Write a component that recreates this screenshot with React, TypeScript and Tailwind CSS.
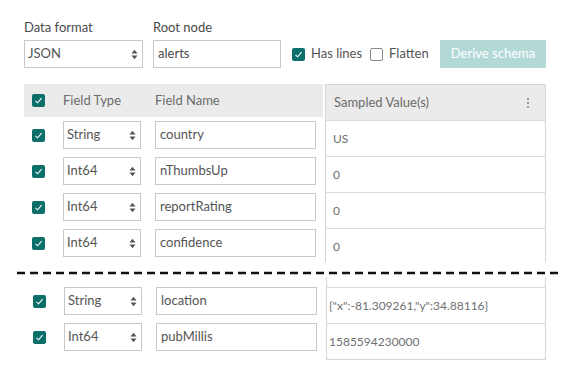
import React from 'react';

type Field = {
	type: string;
	name: string;
	sample: string;
};

const topFields: Field[] = [
	{ type: 'String', name: 'country', sample: 'US' },
	{ type: 'Int64', name: 'nThumbsUp', sample: '0' },
	{ type: 'Int64', name: 'reportRating', sample: '0' },
	{ type: 'Int64', name: 'confidence', sample: '0' }
];

const bottomFields: Field[] = [
	{ type: 'String', name: 'location', sample: '{"x":-81.309261,"y":34.88116}' },
	{ type: 'Int64', name: 'pubMillis', sample: '1585594230000' }
];

const Check = ({ checked = true }: { checked?: boolean }) =>
	checked ? (
		<span className="flex h-[13px] w-[13px] shrink-0 items-center justify-center rounded-[2px] bg-[#0d6f69]">
			<svg width="9" height="9" viewBox="0 0 9 9" fill="none">
				<path d="M1.5 4.8 L3.6 6.8 L7.6 2.2" stroke="white" strokeWidth="1.1" />
			</svg>
		</span>
	) : (
		<span className="block h-[13px] w-[13px] shrink-0 rounded-[2px] border border-[#8a8a8a] bg-white" />
	);

const SortArrows = () => (
	<svg width="7" height="11" viewBox="0 0 7 11" className="shrink-0">
		<path d="M0.5 4.5 L3.5 0.8 L6.5 4.5 Z" fill="#555" />
		<path d="M0.5 6.5 L3.5 10.2 L6.5 6.5 Z" fill="#555" />
	</svg>
);

const Select = ({ value, width }: { value: string; width: string }) => (
	<div
		className={`flex h-[28px] ${width} items-center justify-between border border-[#c8c8c8] bg-white pr-[4px] pl-[3px] text-[13px] text-[#555]`}
	>
		<span>{value}</span>
		<SortArrows />
	</div>
);

const FieldRow = ({ field }: { field: Field }) => (
	<div className="flex h-[36px] items-center">
		<div className="ml-[8px]">
			<Check />
		</div>
		<div className="ml-[18px]">
			<Select value={field.type} width="w-[78px]" />
		</div>
		<div className="ml-[14px] flex h-[28px] w-[161px] items-center border border-[#c8c8c8] bg-white pl-[4px] text-[13px] text-[#555]">
			{field.name}
		</div>
	</div>
);

const SampleCell = ({ value, pad }: { value: string; pad: string }) => (
	<div
		className={`flex h-[36px] items-center border-t border-[#dcdcdc] ${pad} text-[12px] text-[#707070]`}
	>
		{value}
	</div>
);

export default function App() {
	return (
		<div
			className="relative h-[371px] w-[568px] overflow-hidden bg-white"
			style={{ fontFamily: 'Lato, "Noto Sans", sans-serif' }}
		>
			{/* top controls */}
			<div className="flex items-end pt-[18px] pl-[24px]">
				<div className="flex flex-col">
					<span className="mb-[4px] text-[13px] leading-[18px] text-[#4a4a4a]">Data format</span>
					<Select value="JSON" width="w-[119px]" />
				</div>
				<div className="ml-[10px] flex flex-col">
					<span className="mb-[4px] text-[13px] leading-[18px] text-[#4a4a4a]">Root node</span>
					<div className="flex h-[28px] w-[128px] items-center border border-[#c8c8c8] pl-[4px] text-[13px] text-[#4a4a4a]">
						alerts
					</div>
				</div>
				<div className="ml-[11px] flex h-[28px] w-[148px] items-center gap-[6px] text-[13px] text-[#555]">
					<Check />
					<span>Has lines</span>
					<span className="ml-[2px]">
						<Check checked={false} />
					</span>
					<span>Flatten</span>
				</div>
				<button className="flex h-[28px] w-[106px] items-center justify-center bg-[#b3d9d6] text-[13px] text-white">
					Derive schema
				</button>
			</div>

			{/* upper table part */}
			<div className="mt-[16px] flex h-[178px] overflow-hidden pl-[24px]">
				<div className="w-[299px]">
					<div className="flex h-[33px] items-center bg-[#ebebeb] text-[13px] text-[#6b6b6b]">
						<div className="ml-[8px]">
							<Check />
						</div>
						<span className="ml-[18px]">Field Type</span>
						<span className="ml-[34px]">Field Name</span>
					</div>
					{topFields.map(f => (
						<FieldRow key={f.name} field={f} />
					))}
				</div>
				<div className="ml-[2px] w-[221px] border-x border-t border-[#d6d6d6]">
					<div className="flex h-[35px] items-center justify-between bg-[#ebebeb] pr-[16px] pl-[8px] text-[13px] text-[#6b6b6b]">
						<span>Sampled Value(s)</span>
						<span className="flex flex-col gap-[2px]">
							<span className="h-[2px] w-[2px] bg-[#999]" />
							<span className="h-[2px] w-[2px] bg-[#999]" />
							<span className="h-[2px] w-[2px] bg-[#999]" />
						</span>
					</div>
					{topFields.map(f => (
						<SampleCell key={f.name} value={f.sample} pad="pl-[7px]" />
					))}
				</div>
			</div>

			{/* cut line */}
			<div className="h-[15px] pl-[17px]">
				<svg width="545" height="15" viewBox="0 0 545 15">
					<defs>
						<filter id="soft" x="-5%" y="-200%" width="110%" height="500%">
							<feGaussianBlur stdDeviation="1.6" />
						</filter>
					</defs>
					<line
						x1="0"
						y1="15"
						x2="541"
						y2="15"
						stroke="#bdbdbd"
						strokeWidth="4"
						strokeDasharray="8 5"
						filter="url(#soft)"
					/>
					<line x1="0" y1="11" x2="541" y2="11" stroke="#111" strokeWidth="2.4" strokeDasharray="8 5" />
				</svg>
			</div>

			{/* lower table part */}
			<div className="flex pl-[25px]">
				<div className="w-[299px] pt-[6px]">
					{bottomFields.map(f => (
						<FieldRow key={f.name} field={f} />
					))}
				</div>
				<div className="ml-[2px] w-[220px] border-x border-b border-[#d6d6d6]">
					<div className="h-[10px]" />
					{bottomFields.map(f => (
						<SampleCell key={f.name} value={f.sample} pad="pl-[2px]" />
					))}
				</div>
			</div>
		</div>
	);
}
